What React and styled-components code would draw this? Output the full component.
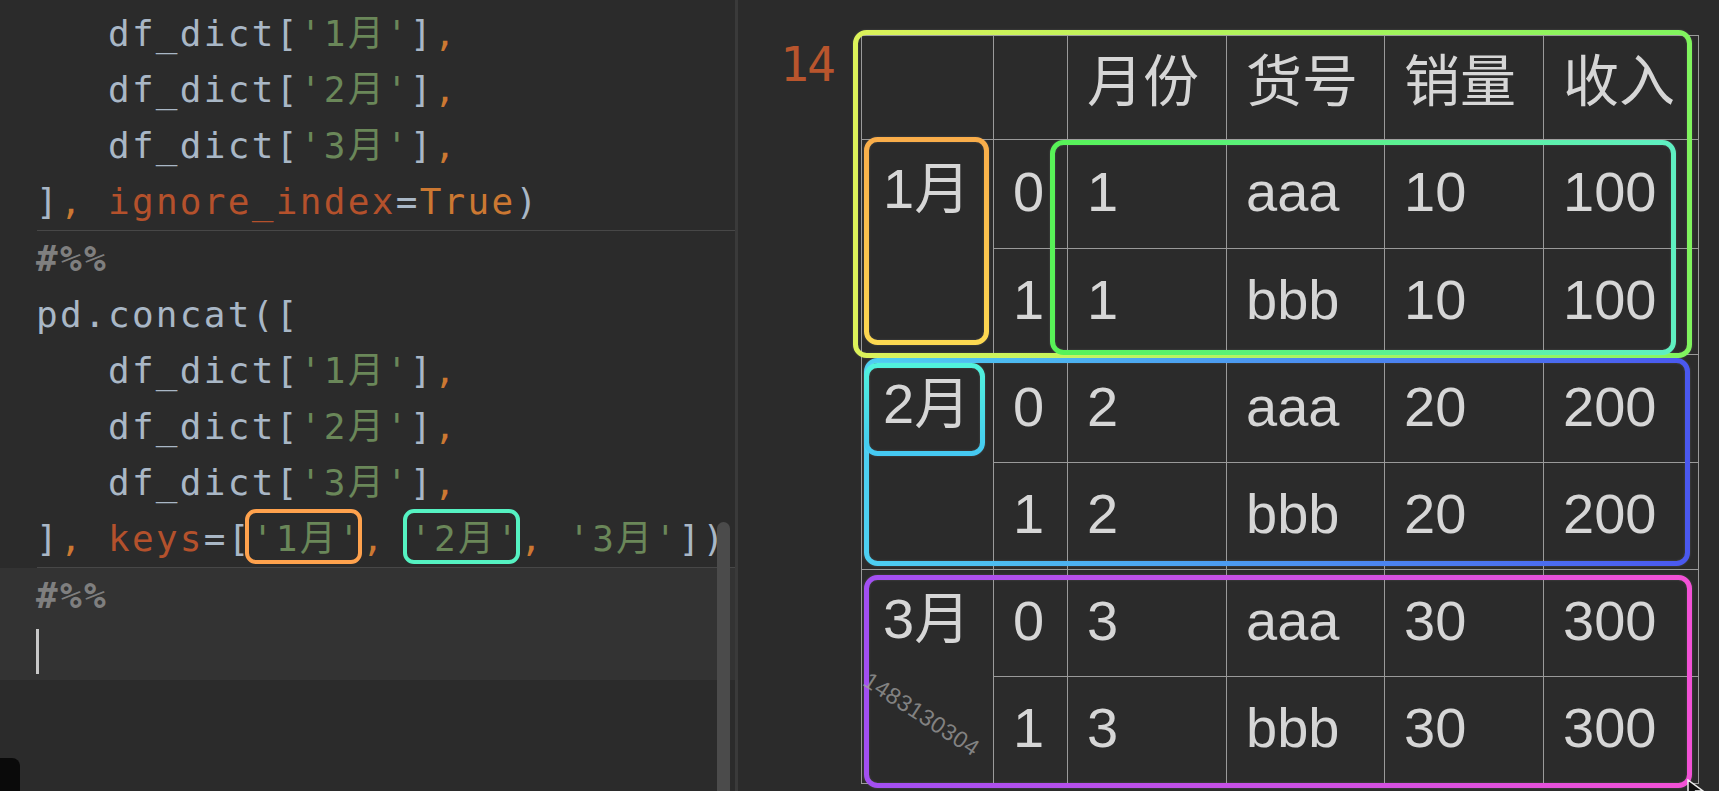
import React from "react";
import styled, { createGlobalStyle, css } from "styled-components";

const GlobalStyle = createGlobalStyle`
  html, body {
    margin: 0;
    padding: 0;
    background: #2b2b2b;
    overflow: hidden;
  }
`;

const Screen = styled.div`
  display: flex;
  width: 1719px;
  height: 791px;
  background: #2b2b2b;
  overflow: hidden;
`;

/* ---------- editor side ---------- */

const Editor = styled.div`
  position: relative;
  width: 735px;
  flex-shrink: 0;
  padding-top: 6px;
  font-family: "DejaVu Sans Mono", "Noto Sans CJK SC", monospace;
  font-size: 36px;
  letter-spacing: 2.3px;
`;

const CodeCell = styled.div`
  background: ${(p) => (p.$active ? "#333333" : "transparent")};
`;

const Separator = styled.div`
  height: 1px;
  margin-left: 37px;
  background: #474747;
`;

const Line = styled.div`
  height: 56px;
  line-height: 56px;
  padding-left: 36px;
  white-space: pre;
  color: #a9b7c6;
`;

const colors = {
  str: "#6a8759",
  kw: "#cc7832",
  arg: "#b4512c",
  note: "#7f7f7f",
};

const Tok = styled.span`
  color: ${(p) => colors[p.$c] || "#a9b7c6"};
  ${(p) =>
    p.$c === "note" &&
    css`
      font-weight: bold;
    `}
`;

const Boxed = styled.span`
  position: relative;
  color: ${colors.str};
  &::after {
    content: "";
    position: absolute;
    top: -9px;
    bottom: -5px;
    left: -7px;
    right: 0;
    border: 4px solid ${(p) => p.$color};
    border-radius: 11px;
  }
`;

const Caret = styled.span`
  display: inline-block;
  width: 3px;
  height: 45px;
  margin-top: 5px;
  vertical-align: top;
  background: #c8c8c8;
`;

const Scrollbar = styled.div`
  position: absolute;
  left: 717px;
  top: 522px;
  bottom: 0;
  width: 13px;
  border-radius: 7px 7px 0 0;
  background: #4b4b4b;
`;

const DockCorner = styled.div`
  position: absolute;
  left: 0;
  bottom: 0;
  width: 20px;
  height: 33px;
  border-radius: 0 8px 0 0;
  background: #0a0a0a;
`;

const Divider = styled.div`
  width: 3px;
  flex-shrink: 0;
  background: #3a3a3a;
`;

/* ---------- output side ---------- */

const Output = styled.div`
  flex: 1;
  display: flex;
  align-items: flex-start;
  padding: 35px 0 0 42px;
`;

const Prompt = styled.div`
  width: 81px;
  margin-top: 5px;
  font-family: "DejaVu Sans Mono", monospace;
  font-size: 48px;
  line-height: 48px;
  letter-spacing: -2px;
  color: #b9552d;
`;

const TableWrap = styled.div`
  position: relative;
`;

const Grid = styled.div`
  display: grid;
  grid-template-columns: 132px 74px 159px 158px 159px 155px;
  grid-template-rows: ${(p) => p.$rows.map((h) => `${h}px`).join(" ")};
  border-left: 1px solid #9a9a9a;
  border-top: 1px solid #9a9a9a;
  font-family: "Liberation Sans", "Noto Sans CJK SC", sans-serif;
  font-size: 56px;
  color: #d6d6d6;
`;

const Cell = styled.div`
  display: flex;
  align-items: center;
  padding-left: 19px;
  padding-bottom: ${(p) => (p.$head ? 12 : 4)}px;
  border-right: 1px solid #9a9a9a;
  border-bottom: 1px solid #9a9a9a;
  line-height: 64px;
  white-space: nowrap;
  overflow: hidden;
`;

const LabelCell = styled(Cell)`
  grid-row: span 2;
  align-items: flex-start;
  padding-left: 21px;
  padding-top: 17px;
`;

const AnnotSvg = styled.svg`
  position: absolute;
  left: ${(p) => p.$x}px;
  top: ${(p) => p.$y}px;
  overflow: visible;
  pointer-events: none;
  filter: drop-shadow(0 0 1px rgba(255, 255, 255, 0.15));
`;

const Watermark = styled.div`
  position: absolute;
  left: 12px;
  top: 632px;
  transform: rotate(33deg);
  transform-origin: left top;
  font-family: "Liberation Sans", sans-serif;
  font-size: 23px;
  letter-spacing: 0.5px;
  color: rgba(160, 160, 160, 0.75);
  white-space: nowrap;
`;

const Pointer = styled.svg`
  position: absolute;
  left: 826px;
  top: 744px;
`;

const Annot = ({ id, x, y, w, h, from, to, vertical }) => {
  const sw = 5;
  return (
    <AnnotSvg $x={x} $y={y} width={w} height={h}>
      <defs>
        <linearGradient id={id} x1="0" y1="0" x2={vertical ? "0" : "1"} y2={vertical ? "1" : "0"}>
          <stop offset="0" stopColor={from} />
          <stop offset="1" stopColor={to} />
        </linearGradient>
      </defs>
      <rect
        x={sw / 2}
        y={sw / 2}
        width={w - sw}
        height={h - sw}
        rx="11"
        fill="none"
        stroke={`url(#${id})`}
        strokeWidth={sw}
      />
    </AnnotSvg>
  );
};

const M = (n) => [
  <Tok key="a">   df_dict[</Tok>,
  <Tok key="b" $c="str">'{n}月'</Tok>,
  <Tok key="c">]</Tok>,
  <Tok key="d" $c="kw">,</Tok>,
];

const groups = [
  {
    label: "1月",
    rows: [
      ["0", "1", "aaa", "10", "100"],
      ["1", "1", "bbb", "10", "100"],
    ],
  },
  {
    label: "2月",
    rows: [
      ["0", "2", "aaa", "20", "200"],
      ["1", "2", "bbb", "20", "200"],
    ],
  },
  {
    label: "3月",
    rows: [
      ["0", "3", "aaa", "30", "300"],
      ["1", "3", "bbb", "30", "300"],
    ],
  },
];

const header = ["", "", "月份", "货号", "销量", "收入"];
const rowHeights = [104, 109, 106, 108, 107, 107, 107];

const annotations = [
  { id: "g1", x: -8, y: -5, w: 839, h: 328, from: "#dcf25a", to: "#80f45e" },
  { id: "g1l", x: 3, y: 102, w: 125, h: 208, from: "#f9ad4a", to: "#fcd851", vertical: true },
  { id: "g1d", x: 189, y: 105, w: 626, h: 215, from: "#58f257", to: "#5ff0c2" },
  { id: "g2", x: 3, y: 323, w: 826, h: 208, from: "#4dcff1", to: "#4a58ef" },
  { id: "g2l", x: 3, y: 328, w: 121, h: 93, from: "#51f2dc", to: "#45c9f2", vertical: true },
  { id: "g3", x: 3, y: 540, w: 828, h: 213, from: "#a24ff2", to: "#f351d6" },
];

const App = () => {
  return (
    <>
      <GlobalStyle />
      <Screen>
        <Editor>
          <CodeCell>
            <Line>{M(1)}</Line>
            <Line>{M(2)}</Line>
            <Line>{M(3)}</Line>
            <Line>
              <Tok>]</Tok>
              <Tok $c="kw">,</Tok>
              <Tok $c="arg"> ignore_index</Tok>
              <Tok>=</Tok>
              <Tok $c="kw">True</Tok>
              <Tok>)</Tok>
            </Line>
          </CodeCell>
          <Separator />
          <CodeCell>
            <Line>
              <Tok $c="note">#%%</Tok>
            </Line>
            <Line>pd.concat([</Line>
            <Line>{M(1)}</Line>
            <Line>{M(2)}</Line>
            <Line>{M(3)}</Line>
            <Line>
              <Tok>]</Tok>
              <Tok $c="kw">,</Tok>
              <Tok $c="arg"> keys</Tok>
              <Tok>=[</Tok>
              <Boxed $color="#ffa24d">'1月'</Boxed>
              <Tok $c="kw">, </Tok>
              <Boxed $color="#55f2c2">'2月'</Boxed>
              <Tok $c="kw">, </Tok>
              <Tok $c="str">'3月'</Tok>
              <Tok>])</Tok>
            </Line>
          </CodeCell>
          <Separator />
          <CodeCell $active>
            <Line>
              <Tok $c="note">#%%</Tok>
            </Line>
            <Line>
              <Caret />
            </Line>
          </CodeCell>
          <Scrollbar />
          <DockCorner />
        </Editor>
        <Divider />
        <Output>
          <Prompt>14</Prompt>
          <TableWrap>
            <Grid $rows={rowHeights}>
              {header.map((h, i) => (
                <Cell key={`h${i}`} $head>
                  {h}
                </Cell>
              ))}
              {groups.map((g) => (
                <React.Fragment key={g.label}>
                  <LabelCell>{g.label}</LabelCell>
                  {g.rows.map((r, ri) =>
                    r.map((v, ci) => <Cell key={`${g.label}-${ri}-${ci}`}>{v}</Cell>)
                  )}
                </React.Fragment>
              ))}
            </Grid>
            {annotations.map((a) => (
              <Annot key={a.id} {...a} />
            ))}
            <Watermark>1483130304</Watermark>
            <Pointer width="20" height="20" viewBox="0 0 20 20">
              <path d="M1 1 L1 19 L6 14 L10 20 L13 18 L9 12 L16 12 Z" fill="#111" stroke="#eee" strokeWidth="1.5" />
            </Pointer>
          </TableWrap>
        </Output>
      </Screen>
    </>
  );
};

export default App;
